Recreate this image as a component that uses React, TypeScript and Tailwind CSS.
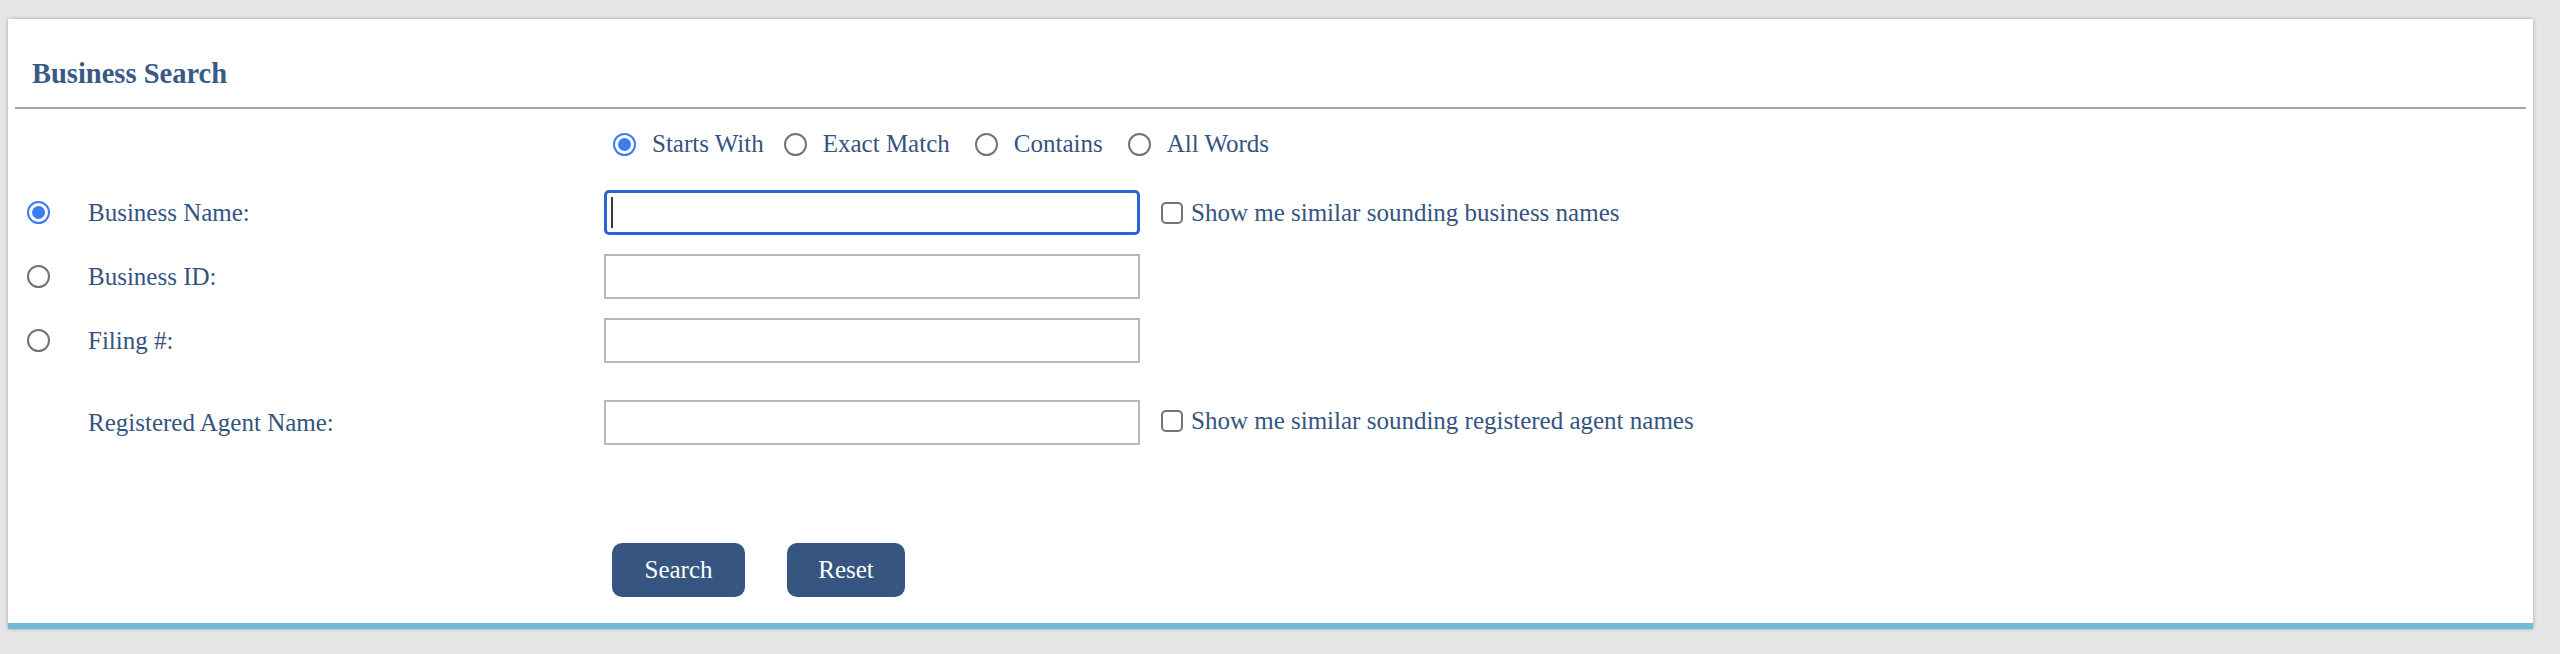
import React from 'react';

const TEXT = 'text-[#34547f]';

function Radio({ checked }: { checked?: boolean }) {
  return checked ? (
    <span className="flex w-[23px] h-[23px] rounded-full border-[2.5px] border-[#3b7cf5] bg-white items-center justify-center shrink-0">
      <span className="block w-[13px] h-[13px] rounded-full bg-[#3b7cf5]" />
    </span>
  ) : (
    <span className="block w-[23px] h-[23px] rounded-full border-2 border-[#737373] bg-white shrink-0" />
  );
}

function Checkbox() {
  return <span className="block w-[22px] h-[22px] rounded-[5px] border-2 border-[#737373] bg-white shrink-0" />;
}

function TextBox({ focused }: { focused?: boolean }) {
  return (
    <div className="relative w-[536px] h-[45px] shrink-0">
      <input
        type="text"
        className={
          focused
            ? 'w-full h-full rounded-[5px] border-[3px] border-[#2d63d0] bg-white outline-none'
            : 'w-full h-full border-2 border-[#b8b8b8] bg-white outline-none'
        }
      />
      {focused && <span className="absolute left-[7px] top-[7px] w-[2px] h-[31px] bg-[#3a3a3a]" />}
    </div>
  );
}

const MATCH_TYPES = [
  { label: 'Starts With', checked: true, gap: 'mr-[20px]' },
  { label: 'Exact Match', checked: false, gap: 'mr-[25px]' },
  { label: 'Contains', checked: false, gap: 'mr-[25px]' },
  { label: 'All Words', checked: false, gap: '' },
];

export default function App() {
  return (
    <div
      className="min-h-[654px] w-[2560px] bg-[#e6e6e6] pt-[19px] pl-[8px]"
      style={{ fontFamily: '"Liberation Serif", "Times New Roman", serif' }}
    >
      <div className="w-[2525px] bg-white border-b-[6px] border-[#6dbbd5] shadow-[0_0_4px_rgba(0,0,0,0.28)] pb-[26px]">
        {/* Titre */}
        <div className="pt-[39px] pl-[24px]">
          <h2 className="text-[28.5px] leading-[32px] font-bold text-[#385a87]">Business Search</h2>
        </div>
        <div className="mx-[7px] mt-[17px] h-[2px] bg-[#a3a3a3]" />

        {/* Type de recherche */}
        <div className={`flex items-center h-[30px] mt-[20px] pl-[605px] text-[25px] ${TEXT}`}>
          {MATCH_TYPES.map(m => (
            <label key={m.label} className={`flex items-center ${m.gap}`}>
              <Radio checked={m.checked} />
              <span className="ml-[16px] leading-[30px]">{m.label}</span>
            </label>
          ))}
        </div>

        {/* Champs */}
        <div className={`text-[25px] ${TEXT}`}>
          <div className="flex items-center h-[45px] mt-[31px]">
            <span className="flex w-[80px] pl-[19px]"><Radio checked /></span>
            <span className="w-[516px]">Business Name:</span>
            <TextBox focused />
            <span className="ml-[21px] flex items-center gap-[8px]">
              <Checkbox />
              <span>Show me similar sounding business names</span>
            </span>
          </div>
          <div className="flex items-center h-[45px] mt-[19px]">
            <span className="flex w-[80px] pl-[19px]"><Radio /></span>
            <span className="w-[516px]">Business ID:</span>
            <TextBox />
          </div>
          <div className="flex items-center h-[45px] mt-[19px]">
            <span className="flex w-[80px] pl-[19px]"><Radio /></span>
            <span className="w-[516px]">Filing #:</span>
            <TextBox />
          </div>
          <div className="flex items-center h-[45px] mt-[37px]">
            <span className="w-[80px]" />
            <span className="w-[516px]">Registered Agent Name:</span>
            <TextBox />
            <span className="ml-[21px] flex items-center gap-[8px] -mt-[4px]">
              <Checkbox />
              <span>Show me similar sounding registered agent names</span>
            </span>
          </div>
        </div>

        {/* Boutons */}
        <div className="flex items-center gap-[42px] mt-[98px] pl-[604px]">
          <button className="w-[133px] h-[54px] rounded-[10px] bg-[#365681] text-white text-[25px]">Search</button>
          <button className="w-[118px] h-[54px] rounded-[10px] bg-[#365681] text-white text-[25px]">Reset</button>
        </div>
      </div>
    </div>
  );
}
